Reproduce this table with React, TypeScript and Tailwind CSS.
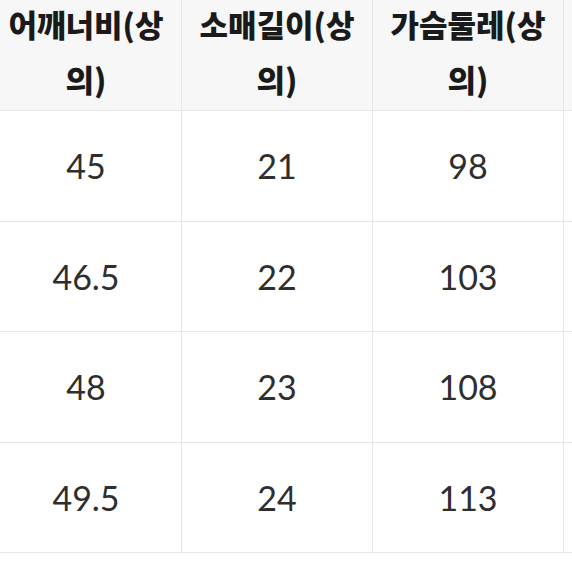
const headers = ["어깨너비(상의)", "소매길이(상의)", "가슴둘레(상의)"];

const rows = [
  ["45", "21", "98"],
  ["46.5", "22", "103"],
  ["48", "23", "108"],
  ["49.5", "24", "113"],
];

export default function App() {
  return (
    <div className="w-[572px] h-[572px] overflow-hidden bg-white">
      <div className="-ml-[9px] grid grid-cols-[191px_191px_191px_191px] w-max">
        {headers.map((h) => (
          <div
            key={h}
            className="h-[111px] flex items-start justify-center border-r border-b border-[#e6e6e6] bg-[#f7f7f7] px-1"
          >
            <p
              className="-mt-[4px] text-center text-[31px] leading-[55px] font-black text-[#1a1a1a] whitespace-nowrap"
              style={{ fontFamily: '"Noto Sans CJK KR", "Noto Sans", sans-serif' }}
            >
              {h.slice(0, 6)}
              <br />
              {h.slice(6)}
            </p>
          </div>
        ))}
        <div className="h-[111px] border-b border-[#e6e6e6] bg-[#f7f7f7]" />

        {rows.map((r, i) => (
          <Row key={i} cells={r} />
        ))}
      </div>
    </div>
  );
}

function Row({ cells }: { cells: string[] }) {
  return (
    <>
      {cells.map((c, j) => (
        <div
          key={j}
          className="h-[110.5px] flex items-center justify-center border-r border-b border-[#e6e6e6] text-[34px] text-[#2e2e2e]"
          style={{ fontFamily: "Lato, sans-serif" }}
        >
          {c}
        </div>
      ))}
      <div className="h-[110.5px] border-b border-[#e6e6e6]" />
    </>
  );
}
